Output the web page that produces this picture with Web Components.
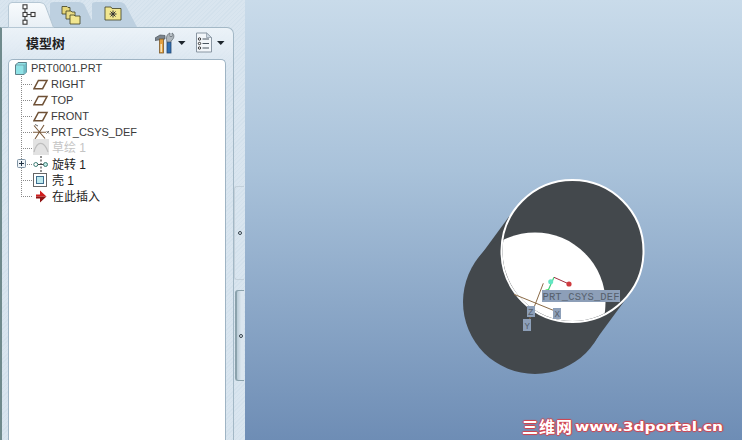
<!DOCTYPE html>
<html>
<head>
<meta charset="utf-8">
<title>Model tree</title>
<style>
  html, body { margin: 0; height: 100%; overflow: hidden; }
  body { font: 11px "Liberation Sans", "Noto Sans CJK SC", sans-serif; color: #333; }
</style>
</head>
<body>
<pro-app>
  <side-panel slot="side">
    <panel-tabs slot="tabs"></panel-tabs>
    <span slot="title">模型树</span>
    <tree-item root label="PRT0001.PRT" icon="part"></tree-item>
    <tree-item label="RIGHT" icon="plane"></tree-item>
    <tree-item label="TOP" icon="plane"></tree-item>
    <tree-item label="FRONT" icon="plane"></tree-item>
    <tree-item label="PRT_CSYS_DEF" icon="csys"></tree-item>
    <tree-item label="草绘 1" icon="sketch" muted></tree-item>
    <tree-item label="旋转 1" icon="revolve" expandable></tree-item>
    <tree-item label="壳 1" icon="shell"></tree-item>
    <tree-item label="在此插入" icon="insert" last></tree-item>
  </side-panel>
  <model-view slot="view"></model-view>
</pro-app>

<script>
class ProApp extends HTMLElement {
  constructor() {
    super();
    this._root = this.attachShadow({ mode: "open" });
    this._root.innerHTML = /*html*/ `
      <style>
        :host { display: flex; width: 742px; height: 440px; overflow: hidden; }
        .side { display: flex; flex: 0 0 245px; }
        .view { display: flex; flex: 1; }
      </style>
      <div class="side"><slot name="side"></slot></div>
      <div class="view"><slot name="view"></slot></div>
    `;
  }
}

class SidePanel extends HTMLElement {
  constructor() {
    super();
    this._root = this.attachShadow({ mode: "open" });
    this._root.innerHTML = /*html*/ `
      <style>
        :host {
          display: flex; flex-direction: column; width: 245px; height: 440px;
          background: repeating-linear-gradient(135deg, #d3e1ec 0 1px, #d9e5ef 1px 3px);
        }
        .tabs { display: flex; height: 27px; flex: none; }
        .row { display: flex; flex: 1; min-height: 0; }
        .body {
          flex: 0 0 234px; box-sizing: border-box; display: flex; flex-direction: column;
          border: 1px solid #a3b8c6; border-left: 2px solid #6f8a8c; border-bottom: 0;
          border-radius: 0 7px 0 0; padding-left: 6px; padding-right: 7px;
          background:
            linear-gradient(180deg, rgba(238,244,249,.9) 0, rgba(224,234,243,.55) 32px, rgba(214,227,238,0) 60px);
        }
        .head { display: flex; align-items: center; height: 31px; flex: none; }
        .title {
          font: bold 13px "Noto Sans CJK SC", sans-serif; color: #222;
          margin-left: 18px; margin-top: -3px; flex: 1;
        }
        .tool { display: flex; align-items: center; margin-top: -2px; }
        .tool svg { display: block; }
        .tree {
          flex: 1; background: #fff; border: 1px solid #9fb4c4; border-bottom: 0;
          border-radius: 5px 5px 0 0; padding-top: 0; margin-bottom: -4px;
        }
        .strip {
          flex: 0 0 10px; display: flex; flex-direction: column; gap: 10px; padding-top: 159px;
        }
        .sash {
          box-sizing: border-box; display: flex; align-items: center; justify-content: flex-start;
          padding-left: 3px; border-radius: 3px 0 0 3px; border: 1px solid #c3d0da; border-right: 0;
        }
        .sash.a { height: 94px; }
        .sash.b {
          height: 91px; margin-left: 1px; padding-left: 2px;
          border: 1px solid #8ba2ac; border-right: 0; border-left-width: 2px;
          background: linear-gradient(90deg, #b9cbd6, #dbe6ef 60%);
        }
        .dot {
          width: 2px; height: 2px; border: 1px solid #34424c; border-radius: 50%; background: #e4edf4;
        }
      </style>
      <div class="tabs"><slot name="tabs"></slot></div>
      <div class="row">
        <div class="body">
          <div class="head">
            <span class="title"><slot name="title"></slot></span>
            <span class="tool">
              <svg width="32" height="22" viewBox="0 0 32 22">
                <path d="M0 6 L5 3 L10 3.5 L10 7 L0 8.5Z" fill="#7b858e" stroke="#4c555c" stroke-width=".7"/>
                <rect x="4.5" y="7" width="4" height="14" fill="#e3a03f" stroke="#7c5a2c" stroke-width=".8"/>
                <rect x="5.5" y="12" width="1.5" height="8" fill="#f6e3bb"/>
                <rect x="12" y="10" width="4" height="11" fill="#2f6fb4" stroke="#23476f" stroke-width=".8"/>
                <path d="M11.5 7.5 C11 4 13 1.5 15 1 L15 4.5 L17 4.5 L17 1 C19.5 2 19.5 6 17 8 L15.5 10 L12 10Z" fill="#aeb6bc" stroke="#5b646b" stroke-width=".7"/>
                <path d="M23 9 L30.5 9 L26.75 13Z" fill="#1d252c"/>
              </svg>
            </span>
            <span class="tool" style="margin-left:8px">
              <svg width="31" height="22" viewBox="0 0 31 22">
                <path d="M1.5 1 L11.5 1 L16.5 5.5 L16.5 20 L1.5 20Z" fill="#f2f6fa" stroke="#8a97a3"/>
                <path d="M11.5 1 L11.5 5.5 L16.5 5.5Z" fill="#cfd9e2" stroke="#8a97a3" stroke-width=".7"/>
                <g fill="#fff" stroke="#333" stroke-width="1">
                  <circle cx="4.5" cy="7" r="1.2"/><circle cx="4.5" cy="11.5" r="1.2"/><circle cx="4.5" cy="16" r="1.2"/>
                </g>
                <path d="M7.5 7 H14 M7.5 11.5 H14 M7.5 16 H14" stroke="#4a5660"/>
                <path d="M22 9 L29.5 9 L25.75 13Z" fill="#1d252c"/>
              </svg>
            </span>
          </div>
          <div class="tree"><slot></slot></div>
        </div>
        <div class="strip">
          <div class="sash a"><span class="dot"></span></div>
          <div class="sash b"><span class="dot"></span></div>
        </div>
      </div>
    `;
  }
}

class PanelTabs extends HTMLElement {
  constructor() {
    super();
    this._root = this.attachShadow({ mode: "open" });
    this._root.innerHTML = /*html*/ `
      <style>
        :host { display: flex; height: 27px; padding-left: 8px; }
        .tab { width: 42px; height: 27px; position: relative; display: flex; align-items: center; justify-content: center; }
        .tab > svg.shape { position: absolute; left: 0; top: 0; }
        .tab > svg.ico { position: relative; }
        .tab.first { z-index: 2; }
        .tab.first > svg.ico { margin-left: -3px; }
        .tab:nth-child(2) > svg.ico { margin-left: -1px; margin-top: 2px; }
        .tab:nth-child(3) > svg.ico { margin-top: 3px; }
      </style>
      <div class="tab first">
        <svg class="shape" width="54" height="28" viewBox="0 0 54 28">
          <defs><linearGradient id="act" x1="0" y1="0" x2="0" y2="1">
            <stop offset="0" stop-color="#f8fbfd"/><stop offset="1" stop-color="#e8eff5"/>
          </linearGradient></defs>
          <path d="M.5 27.5 L.5 6 Q.5 2.5 4 2.5 L32 2.5 Q36 2.5 37.5 6 L45.5 27.5Z" fill="url(#act)" stroke="#b5c7d4"/>
        </svg>
        <svg class="ico" width="14" height="21" viewBox="0 0 14 21" fill="#fff" stroke="#3a3a3a" stroke-width="1.1">
          <rect x="1" y=".8" width="4" height="4"/>
          <rect x="1" y="8.5" width="4" height="4"/>
          <rect x="1" y="16.2" width="4" height="4"/>
          <rect x="9" y="8.5" width="4" height="4"/>
          <path d="M3 4.8 V8.5 M3 12.5 V16.2 M5 10.5 H9" fill="none"/>
        </svg>
      </div>
      <div class="tab">
        <svg class="shape" width="54" height="28" viewBox="0 0 54 28">
          <path d="M0 27 L0 4 Q0 2 4 2 L28 2 Q33 2 35 6 L45 27Z" fill="#bdd0e0"/>
        </svg>
        <svg class="ico" width="20" height="20" viewBox="0 0 20 20" stroke="#3f3f22" stroke-width=".8">
          <path d="M1 1.5 H6 L7 2.5 H9 V9 H1Z" fill="#e6d77a"/>
          <path d="M5 6 H10 L11 7 H14 V14 H5Z" fill="#e9dc85"/>
          <path d="M9 10 H13 L14 11 H19 V19 H9Z" fill="#f1e690"/>
        </svg>
      </div>
      <div class="tab">
        <svg class="shape" width="54" height="28" viewBox="0 0 54 28">
          <path d="M0 27 L0 4 Q0 2 4 2 L27 2 Q32 2 34 6 L45 27Z" fill="#bdd0e0"/>
        </svg>
        <svg class="ico" width="18" height="15" viewBox="0 0 18 15" stroke="#3f3f22" stroke-width=".8">
          <path d="M1 1 H7 L8 2.5 H17 V14 H1Z" fill="#f1e690"/>
          <path d="M5.5 8 H12.5 M9 4.5 V11.5 M6.5 5.5 L11.5 10.5 M11.5 5.5 L6.5 10.5" stroke="#333" stroke-width="1"/>
        </svg>
      </div>
    `;
  }
}

const TREE_ICONS = {
  part: `<svg width="12" height="13" viewBox="0 0 12 13"><path d="M.5 3 L3 .5 H11.5 V10 L9 12.5 H.5Z" fill="#8fe2e6" stroke="#5f7f88"/><path d="M.5 3 H9 V12.5" fill="none" stroke="#6b8b93" stroke-width=".6"/><path d="M9 3 L11.5 .5 V10 L9 12.5Z" fill="#6fbcc6"/></svg>`,
  plane: `<svg width="16" height="16" viewBox="0 0 16 16"><path d="M1 12.7 L5.4 4.5 H14 L9.6 12.7Z" fill="none" stroke="#6f5136" stroke-width="1.5"/></svg>`,
  csys: `<svg width="17" height="16" viewBox="0 0 17 16"><path d="M1 1.5 L12 14.5 M11 1 L2 15 M0 8.2 H13" fill="none" stroke="#7a5a3c" stroke-width="1.1"/><path d="M2 .5 L5 2 M13.5 7 L16 9.5 M16 7 L13.5 9.5" stroke="#666" fill="none"/></svg>`,
  sketch: `<svg width="16" height="16" viewBox="0 0 16 16" style="margin-top:-2px"><rect width="16" height="16" fill="#e2e2e2"/><path d="M1 13 C4 1.5 11 1.5 15 13" fill="none" stroke="#bdbdbd" stroke-width="1.2"/></svg>`,
  revolve: `<svg width="16" height="16" viewBox="0 0 16 16"><path d="M8 0 V16" stroke="#222" stroke-dasharray="2 1.5"/><circle cx="2.8" cy="8.5" r="2" fill="#fff" stroke="#3a7a72"/><circle cx="12.5" cy="8.5" r="2" fill="#bde8e3" stroke="#3a7a72"/><path d="M5 8.5 H10.5" stroke="#444"/></svg>`,
  shell: `<svg width="14" height="14" viewBox="0 0 14 14"><rect x=".5" y=".5" width="13" height="13" fill="#fff" stroke="#666"/><rect x="3.5" y="3.5" width="7" height="7" fill="#bfe9ee" stroke="#3f6f8f"/></svg>`,
  insert: `<svg width="14" height="13" viewBox="0 0 14 13"><path d="M3 4.5 H7 V.5 L13.5 6.5 H3Z" fill="#d01c1c"/><path d="M3 6.5 H13.5 L7 12.5 V8.5 H3Z" fill="#8f1212"/></svg>`
};

class TreeItem extends HTMLElement {
  connectedCallback() {
    const root = this.attachShadow({ mode: "open" });
    const isRoot = this.hasAttribute("root");
    const last = this.hasAttribute("last");
    const muted = this.hasAttribute("muted");
    const plus = this.hasAttribute("expandable")
      ? `<svg class="plus" width="9" height="9" viewBox="0 0 9 9"><rect x=".5" y=".5" width="8" height="8" rx="1" fill="#eef3f7" stroke="#7f93a3"/><path d="M2 4.5 H7 M4.5 2 V7" stroke="#234"/></svg>`
      : "";
    root.innerHTML = /*html*/ `
      <style>
        :host { display: block; height: 16px; }
        .row { position: relative; display: flex; align-items: center; height: 16px; padding-left: ${isRoot ? 6 : 12}px; font-size: 11px; white-space: nowrap; }
        .guide {
          flex: 0 0 12px; height: 16px;
          background-image:
            repeating-linear-gradient(180deg, #8a8a8a 0 1px, transparent 1px 2px),
            repeating-linear-gradient(90deg, #8a8a8a 0 1px, transparent 1px 2px);
          background-size: 1px ${last ? "8px" : "16px"}, 12px 1px;
          background-position: 0 0, 0 8px;
          background-repeat: no-repeat;
        }
        .ico { display: flex; align-items: center; flex: 0 0 ${isRoot ? 16 : 18}px; height: 16px; }
        .ico svg { display: block; }
        .label { color: ${muted ? "#c4c4c4" : "#3a3a3a"}; }
        .label.cjk { font-size: 12px; margin-left: 1px; margin-top: ${muted ? -4 : -2}px; color: ${muted ? "#c4c4c4" : "#222"}; }
        .plus { position: absolute; left: 8px; top: 3px; }
        .insert { margin-left: 3px; }
      </style>
      <div class="row">
        ${isRoot ? "" : `<span class="guide"></span>`}
        ${plus}
        <span class="ico">${TREE_ICONS[this.getAttribute("icon")]}</span>
        <span class="label ${/[^\x00-\x7f]/.test(this.getAttribute("label")) ? "cjk" : ""}">${this.getAttribute("label")}</span>
      </div>
    `;
  }
}

class ModelView extends HTMLElement {
  constructor() {
    super();
    this._root = this.attachShadow({ mode: "open" });
    this._root.innerHTML = /*html*/ `
      <style>
        :host {
          display: block; position: relative; flex: 1; height: 440px;
          background: linear-gradient(180deg, #c9dbea 0, #a9c2da 170px, #6e8db5 440px);
        }
        svg { position: absolute; left: 0; top: 0; }
        .mark {
          position: absolute; left: 277px; top: 414px; white-space: nowrap; color: #fff;
          text-shadow: 1px 0 1px #d8404a, -1px 0 1px #d8404a, 0 1px 1px #d8404a, 0 -1px 1px #d8404a;
          font: bold 13px "DejaVu Sans", sans-serif; display: flex; align-items: center;
        }
        .mark b { font: bold 16px "Noto Sans CJK SC", sans-serif; letter-spacing: 1px; margin-right: 2px; }
        .mark span { display: inline-block; transform: scaleX(1.19); transform-origin: left center; }
      </style>
      <svg width="497" height="440" viewBox="245 0 497 440">
        <defs>
          <clipPath id="mouth"><circle cx="572.5" cy="251" r="70"/></clipPath>
        </defs>
        <path d="M477.4 259.7 L514.9 208.7 L630.1 293.3 L592.6 344.3Z" fill="#43484c"/>
        <circle cx="535" cy="302" r="72" fill="#43484c"/>
        <circle cx="572.5" cy="251" r="71" fill="#43484c"/>
        <circle cx="535" cy="303" r="70.5" fill="#fff" clip-path="url(#mouth)"/>
        <circle cx="572.5" cy="251" r="71" fill="none" stroke="#fff" stroke-width="2"/>
        <path d="M543.3 283.3 L528 323 M514 294.3 L555 311" stroke="#8a6a45" fill="none"/>
        <path d="M547.3 292.3 L554 277.3" stroke="#3fce7a" stroke-width="1.2"/>
        <path d="M554 277.3 L569 284" stroke="#a03040"/>
        <circle cx="547.3" cy="292.3" r="3" fill="#35e04a"/>
        <circle cx="550.7" cy="281.7" r="2.5" fill="#62e6c4"/>
        <circle cx="569" cy="284" r="2.6" fill="#cf3a3e"/>
        <g fill="#8d9fb8">
          <rect x="542" y="290" width="78" height="12"/>
          <rect x="527" y="306" width="8" height="11"/>
          <rect x="523" y="319" width="8" height="12"/>
          <rect x="553" y="308" width="8" height="11"/>
        </g>
        <g fill="#56606c" font-family="Liberation Mono" font-size="10.5">
          <text x="542.5" y="300" textLength="77">PRT_CSYS_DEF</text>
          <text x="528" y="315" font-size="9">Z</text>
          <text x="524.5" y="329" font-size="9">Y</text>
          <text x="554.5" y="317" font-size="9">X</text>
        </g>
      </svg>
      <div class="mark"><b>三维网</b><span>www.3dportal.cn</span></div>
    `;
  }
}

window.customElements.define("pro-app", ProApp);
window.customElements.define("side-panel", SidePanel);
window.customElements.define("panel-tabs", PanelTabs);
window.customElements.define("tree-item", TreeItem);
window.customElements.define("model-view", ModelView);
</script>
</body>
</html>
